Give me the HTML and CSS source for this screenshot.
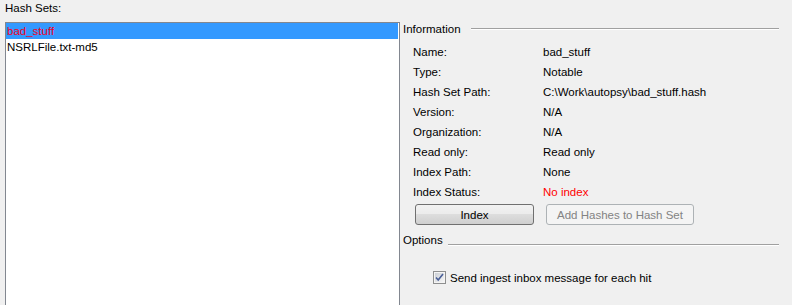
FILE: index.html
```html
<!DOCTYPE html>
<html>
<head>
    <title>Hash Sets</title>
    <link rel="stylesheet" href="styles.css">
</head>
<body>
    <div class="layout">
        <div class="sets-column">
            <div class="sets-label">Hash Sets:</div>
            <div class="sets-list">
                <div class="set-item selected">bad_stuff</div>
                <div class="set-item">NSRLFile.txt-md5</div>
            </div>
        </div>

        <div class="details">
            <div class="section-title">
                <span>Information</span>
                <div class="rule"></div>
            </div>

            <div class="info-grid">
                <div class="info-label">Name:</div>
                <div class="info-value">bad_stuff</div>

                <div class="info-label">Type:</div>
                <div class="info-value">Notable</div>

                <div class="info-label">Hash Set Path:</div>
                <div class="info-value">C:\Work\autopsy\bad_stuff.hash</div>

                <div class="info-label">Version:</div>
                <div class="info-value">N/A</div>

                <div class="info-label">Organization:</div>
                <div class="info-value">N/A</div>

                <div class="info-label">Read only:</div>
                <div class="info-value">Read only</div>

                <div class="info-label">Index Path:</div>
                <div class="info-value">None</div>

                <div class="info-label">Index Status:</div>
                <div class="info-value status-bad">No index</div>
            </div>

            <div class="button-row">
                <button class="btn btn-index">Index</button>
                <button class="btn" disabled>Add Hashes to Hash Set</button>
            </div>

            <div class="section-title options-title">
                <span>Options</span>
                <div class="rule"></div>
            </div>

            <label class="check-row">
                <svg class="check-box" width="13" height="13" viewBox="0 0 13 13">
                    <defs>
                        <linearGradient id="boxFill" x1="0" y1="0" x2="1" y2="1">
                            <stop offset="0" stop-color="#cbcfd5"/>
                            <stop offset="1" stop-color="#f6f6f6"/>
                        </linearGradient>
                    </defs>
                    <rect x="0.5" y="0.5" width="12" height="12" fill="#f4f4f4" stroke="#8e8f8f"/>
                    <rect x="2" y="2" width="9" height="9" fill="url(#boxFill)"/>
                    <path d="M3 6.5 L5.2 9 L10 3" fill="none" stroke="#4a5f97" stroke-width="1.6"/>
                </svg>
                <span>Send ingest inbox message for each hit</span>
            </label>
        </div>
    </div>
</body>
</html>
```

FILE: styles.css
```css
body {
    margin: 0;
    background-color: #f0f0f0;
    font-family: "Liberation Sans", Arial, sans-serif;
    font-size: 11.5px;
    color: #000;
    overflow: hidden;
}

.layout {
    display: flex;
    height: 305px;
    overflow: hidden;
}

.sets-column {
    display: flex;
    flex-direction: column;
    width: 395px;
    padding-left: 5px;
}

.sets-label {
    height: 22px;
    line-height: 16px;
}

.sets-list {
    flex: 1;
    background-color: #fff;
    border: 1px solid #828790;
    border-bottom: none;
}

.set-item {
    height: 16px;
    line-height: 16px;
    padding-left: 1px;
    margin-right: 1px;
}

.set-item.selected {
    background-color: #3399ff;
    color: #f20024;
}

.details {
    width: 376px;
    padding-left: 3px;
    padding-top: 21px;
}

.section-title {
    display: flex;
    align-items: center;
    height: 16px;
}

.section-title .rule {
    flex: 1;
    margin-left: 10px;
    border-top: 1px solid #a0a0a0;
    border-bottom: 1px solid #fff;
}

.options-title {
    align-items: flex-end;
    margin-top: 8px;
    height: 13px;
}

.options-title .rule {
    margin-left: 5px;
}

.info-grid {
    display: grid;
    grid-template-columns: 130px auto;
    grid-auto-rows: 20px;
    align-items: center;
    padding-left: 10px;
    margin-top: 5px;
}

.status-bad {
    color: #ff0000;
}

.button-row {
    display: flex;
    gap: 12px;
    padding-left: 12px;
    margin-top: 2px;
}

.btn {
    height: 21px;
    padding: 0;
    font-family: "Liberation Sans", Arial, sans-serif;
    font-size: 11.5px;
    border-radius: 3px;
}

.btn-index {
    width: 119px;
    color: #000;
    border: 1px solid #707070;
    background: linear-gradient(#f2f2f2 0%, #ebebeb 50%, #dddddd 50%, #cfcfcf 100%);
}

.btn[disabled] {
    width: 148px;
    color: #838383;
    border: 1px solid #adb2b5;
    background-color: #f4f4f4;
}

.check-row {
    display: flex;
    align-items: center;
    gap: 4px;
    margin-top: 25px;
    padding-left: 30px;
}

.check-box {
    display: block;
}
```
